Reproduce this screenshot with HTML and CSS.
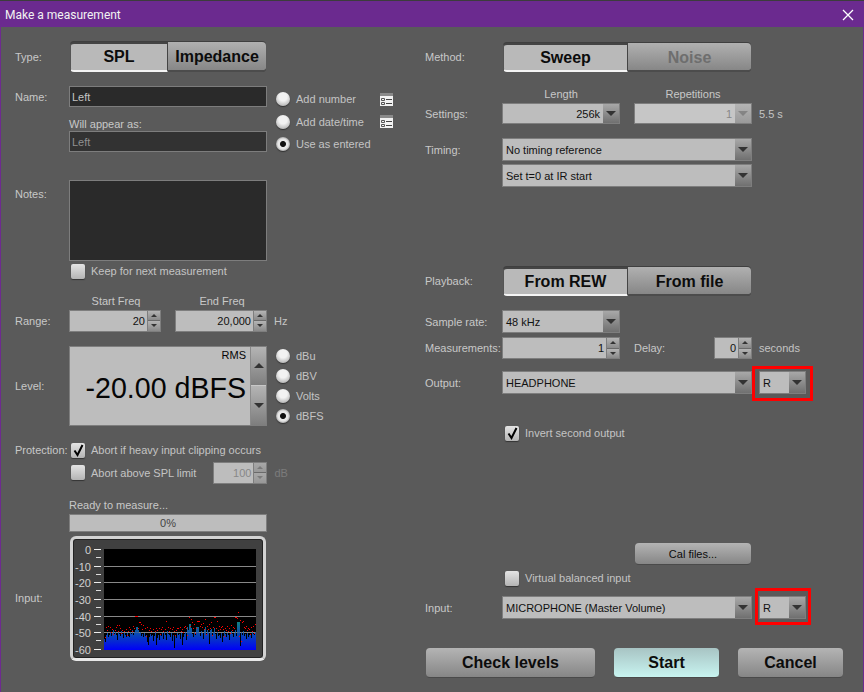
FILE: index.html
```html
<!DOCTYPE html>
<html lang="en">
<head>
    <meta charset="UTF-8">
    <title>Make a measurement</title>
    <link rel="stylesheet" href="styles.css">
</head>
<body>

<div class="dialog">
    <div class="titlebar">
        <span>Make a measurement</span>
        <svg class="close-icon" width="12" height="12" viewBox="0 0 12 12"><path d="M1 1L11 11M11 1L1 11" stroke="#fff" stroke-width="1.3" fill="none"/></svg>
    </div>

    <div class="content">
        <!-- Left column -->
        <div class="col col-left">
            <div class="row row-type">
                <span class="label">Type:</span>
                <div class="seg seg-type">
                    <span class="seg-btn on seg-spl">SPL</span>
                    <span class="seg-btn seg-imp">Impedance</span>
                </div>
            </div>

            <div class="row row-name">
                <span class="label">Name:</span>
                <div class="name-fields">
                    <div class="text-box">Left</div>
                    <div class="small-head">Will appear as:</div>
                    <div class="text-box dim">Left</div>
                </div>
                <div class="name-radios">
                    <div class="radio-row"><i class="radio"></i><span class="radio-text">Add number</span>
                        <svg class="list-icon" width="13" height="13" viewBox="0 0 13 13"><rect width="13" height="13" fill="#f2f2f2"/><rect width="13" height="3" fill="#8a8a8a"/><path d="M1.5 5.5h3v2h-3zM1.5 9.5h3v2h-3z" fill="none" stroke="#555"/><path d="M6 6.5h6M6 10.5h6" stroke="#444"/></svg>
                    </div>
                    <div class="radio-row"><i class="radio"></i><span class="radio-text">Add date/time</span>
                        <svg class="list-icon" width="13" height="13" viewBox="0 0 13 13"><rect width="13" height="13" fill="#f2f2f2"/><rect width="13" height="3" fill="#8a8a8a"/><path d="M1.5 5.5h3v2h-3zM1.5 9.5h3v2h-3z" fill="none" stroke="#555"/><path d="M6 6.5h6M6 10.5h6" stroke="#444"/></svg>
                    </div>
                    <div class="radio-row"><i class="radio sel"></i><span class="radio-text">Use as entered</span></div>
                </div>
            </div>

            <div class="row row-notes">
                <span class="label notes-label">Notes:</span>
                <div class="notes-box"></div>
            </div>
            <div class="row row-keep">
                <i class="check"></i><span class="check-text">Keep for next measurement</span>
            </div>

            <div class="row freq-heads">
                <span class="freq-head">Start Freq</span>
                <span class="freq-head end">End Freq</span>
            </div>
            <div class="row row-range">
                <span class="label">Range:</span>
                <div class="num-box freq"><span class="val">20</span><span class="spin"><b></b><b></b></span></div>
                <div class="num-box freq end"><span class="val">20,000</span><span class="spin"><b></b><b></b></span></div>
                <span class="unit">Hz</span>
            </div>

            <div class="row row-level">
                <span class="label">Level:</span>
                <div class="level-box">
                    <div class="level-read">
                        <span class="rms">RMS</span>
                        <span class="level-val">-20.00 dBFS</span>
                    </div>
                    <div class="level-arrows"><b class="up"></b><b class="down"></b></div>
                </div>
                <div class="level-radios">
                    <div class="radio-row"><i class="radio"></i><span class="radio-text">dBu</span></div>
                    <div class="radio-row"><i class="radio"></i><span class="radio-text">dBV</span></div>
                    <div class="radio-row"><i class="radio"></i><span class="radio-text">Volts</span></div>
                    <div class="radio-row"><i class="radio sel"></i><span class="radio-text">dBFS</span></div>
                </div>
            </div>

            <div class="row row-prot">
                <span class="label">Protection:</span>
                <i class="check on"><svg width="15" height="15" viewBox="0 0 15 15"><path d="M3.5 7.5L6.5 12L11.5 2" fill="none" stroke="#000" stroke-width="2"/></svg></i>
                <span class="check-text">Abort if heavy input clipping occurs</span>
            </div>
            <div class="row row-limit">
                <i class="check"></i><span class="check-text">Abort above SPL limit</span>
                <div class="num-box limit disabled"><span class="val">100</span><span class="spin"><b></b><b></b></span></div>
                <span class="unit off">dB</span>
            </div>

            <div class="ready">Ready to measure...</div>
            <div class="progress">0%</div>

            <div class="row row-input">
                <span class="label">Input:</span>
                <div class="meter">
                    <svg id="meterPlot" width="188" height="115" viewBox="74 541 188 115"></svg>
                </div>
            </div>
        </div>

        <!-- Right column -->
        <div class="col col-right">
            <div class="row row-method">
                <span class="label">Method:</span>
                <div class="seg seg-wide">
                    <span class="seg-btn on">Sweep</span>
                    <span class="seg-btn off">Noise</span>
                </div>
            </div>

            <div class="row set-heads">
                <span class="set-head">Length</span>
                <span class="set-head">Repetitions</span>
            </div>
            <div class="row row-settings">
                <span class="label">Settings:</span>
                <div class="select short right"><span class="sel-text">256k</span><span class="drop"></span></div>
                <div class="select short right disabled"><span class="sel-text">1</span><span class="drop"></span></div>
                <span class="unit">5.5 s</span>
            </div>

            <div class="row row-timing">
                <span class="label">Timing:</span>
                <div class="select long"><span class="sel-text">No timing reference</span><span class="drop"></span></div>
            </div>
            <div class="row row-timing-b">
                <div class="select long"><span class="sel-text">Set t=0 at IR start</span><span class="drop"></span></div>
            </div>

            <div class="row row-playback">
                <span class="label">Playback:</span>
                <div class="seg seg-wide">
                    <span class="seg-btn on">From REW</span>
                    <span class="seg-btn">From file</span>
                </div>
            </div>

            <div class="row row-rate">
                <span class="label">Sample rate:</span>
                <div class="select short"><span class="sel-text">48 kHz</span><span class="drop"></span></div>
            </div>
            <div class="row row-meas">
                <span class="label">Measurements:</span>
                <div class="num-box meas"><span class="val">1</span><span class="spin"><b></b><b></b></span></div>
                <span class="delay-label">Delay:</span>
                <div class="num-box delay"><span class="val">0</span><span class="spin"><b></b><b></b></span></div>
                <span class="unit">seconds</span>
            </div>

            <div class="row row-output">
                <span class="label">Output:</span>
                <div class="select long"><span class="sel-text">HEADPHONE</span><span class="drop"></span></div>
                <div class="select chan"><span class="sel-text">R</span><span class="drop"></span><span class="mark mark-out"></span></div>
            </div>

            <div class="row row-invert">
                <i class="check on"><svg width="15" height="15" viewBox="0 0 15 15"><path d="M3.5 7.5L6.5 12L11.5 2" fill="none" stroke="#000" stroke-width="2"/></svg></i>
                <span class="check-text">Invert second output</span>
            </div>

            <div class="row row-cal">
                <span class="btn cal">Cal files...</span>
            </div>
            <div class="row row-virtual">
                <i class="check"></i><span class="check-text">Virtual balanced input</span>
            </div>
            <div class="row row-mic">
                <span class="label">Input:</span>
                <div class="select long"><span class="sel-text">MICROPHONE (Master Volume)</span><span class="drop"></span></div>
                <div class="select chan"><span class="sel-text">R</span><span class="drop"></span><span class="mark mark-in"></span></div>
            </div>

            <div class="row row-actions">
                <span class="btn big check-levels">Check levels</span>
                <span class="btn big start">Start</span>
                <span class="btn big cancel">Cancel</span>
            </div>
        </div>
    </div>
</div>

<script src="meter.js"></script>
</body>
</html>
```

FILE: styles.css
```css
* {
    box-sizing: border-box;
}
html, body {
    margin: 0;
    padding: 0;
}
body {
    width: 864px;
    height: 692px;
    overflow: hidden;
    font-family: "Liberation Sans", Arial, sans-serif;
    font-size: 11px;
    color: #c8c8c8;
    background-color: #5a5a5a;
}
.dialog {
    width: 864px;
    height: 692px;
    display: flex;
    flex-direction: column;
    border-left: 1px solid #6e2a90;
    border-right: 1px solid #6e2a90;
}
.titlebar {
    height: 27px;
    flex: none;
    margin: 0 -1px;
    display: flex;
    align-items: center;
    justify-content: space-between;
    padding: 1px 10px 0 5px;
    background-color: #6b2a8f;
    border-top: 1px solid #3c3c3c;
    font-family: Roboto, sans-serif;
    font-size: 12px;
    color: #f2f2f2;
}
.content {
    display: flex;
    flex: 1;
}
.col-left {
    width: 410px;
    padding-left: 14px;
}
.col-right {
    width: 438px;
    padding-left: 14px;
}
.row {
    display: flex;
    align-items: center;
}
.label {
    flex: none;
}
.col-left .label {
    width: 54px;
}
.col-right .label {
    width: 77px;
}

/* segmented toggle */
.seg {
    display: flex;
    border-radius: 4px;
    background: #3f3f3f;
    padding: 1px 0 0;
}
.seg-type {
    margin-left: 1px;
    width: 196px;
    height: 31px;
}
.seg-wide {
    margin-left: 1px;
    width: 248px;
    height: 30px;
}
.seg-btn {
    display: flex;
    align-items: center;
    justify-content: center;
    flex: 1;
    font-size: 16px;
    font-weight: bold;
    color: #0c0c0c;
    background: linear-gradient(#b0b0b0, #848484);
    border-radius: 0 4px 4px 0;
    border-top: 2px solid transparent;
    background-origin: border-box;
    border-bottom: 2px solid #4c4c4c;
}
.seg-btn.on {
    background: #b9b9b9;
    border-radius: 4px 0 0 4px;
    border-top: 2px solid #444;
    border-left: 1px solid #555;
    border-right: 1px solid #444;
    border-bottom: 2px solid #f4f4f4;
}
.seg-btn.off {
    color: #6e6e6e;
}
.seg-spl {
    flex: none;
    width: 98px;
}
.seg-imp {
    flex: none;
    width: 98px;
}

/* text boxes */
.text-box {
    height: 21px;
    padding-left: 2px;
    line-height: 20px;
    background-color: #2a2a2a;
    border: 1px solid #7d7d7d;
    color: #c4c4c4;
}
.text-box.dim {
    background-color: #323232;
    color: #909090;
}
.row-type {
    margin-top: 14px;
}
.row-name {
    margin-top: 14px;
    align-items: flex-start;
}
.row-name .label {
    margin-top: 5px;
}
.name-fields {
    width: 198px;
}
.small-head {
    margin-top: 11px;
    height: 13px;
    line-height: 13px;
    color: #c8c8c8;
}
.name-radios {
    margin-left: 9px;
    padding-top: 2px;
}
.radio-row {
    display: flex;
    align-items: center;
    height: 22.5px;
}
.radio {
    flex: none;
    width: 14px;
    height: 14px;
    margin-right: 6px;
    border-radius: 50%;
    background: radial-gradient(circle at 50% 35%, #f2f2f2 35%, #a8a8a8 90%);
    box-shadow: 0 1px 1px #333;
}
.radio.sel {
    background: radial-gradient(circle, #111 0 2.5px, #e8e8e8 3.5px 5px, #aaa 7px);
}
.radio-text {
    color: #c4c4c4;
}
.name-radios .radio-text {
    width: 84px;
}
.list-icon {
    flex: none;
}
.row-notes {
    margin-top: 24px;
    align-items: flex-start;
}
.notes-label {
    margin-top: 8px;
}
.notes-box {
    width: 198px;
    height: 81px;
    background-color: #2a2a2a;
    border: 1px solid #7d7d7d;
}

/* check boxes */
.check {
    flex: none;
    width: 14px;
    height: 15px;
    margin-left: 2px;
    margin-right: 6px;
    border-radius: 2px;
    background: linear-gradient(#e4e4e4, #b4b4b4);
    box-shadow: 0 1px 1px #333;
}
.check svg {
    display: block;
}
.check-text {
    color: #c4c4c4;
}
.row-keep {
    margin-top: 3px;
    padding-left: 54px;
    height: 15px;
}
.freq-heads {
    margin-top: 15px;
    height: 14px;
    padding-left: 55px;
}
.freq-head {
    width: 92px;
    text-align: center;
}
.freq-head.end {
    margin-left: 14px;
}
.row-range {
    margin-top: 2px;
}

/* number spinners */
.num-box {
    display: flex;
    height: 22px;
    background-color: #bdbdbd;
    border: 1px solid #7e7e7e;
    color: #111;
}
.num-box .val {
    flex: 1;
    text-align: right;
    padding-right: 2px;
    line-height: 21px;
    font-size: 11px;
}
.spin {
    flex: none;
    width: 13px;
    display: flex;
    flex-direction: column;
    border-left: 1px solid #7e7e7e;
}
.spin b {
    flex: 1;
    display: flex;
    align-items: center;
    justify-content: center;
    background: linear-gradient(#b4b4b4, #8a8a8a);
}
.spin b:first-child {
    border-bottom: 1px solid #6a6a6a;
}
.spin b::after {
    content: "";
    border-left: 3px solid transparent;
    border-right: 3px solid transparent;
    border-bottom: 3px solid #333;
}
.spin b:last-child::after {
    border-bottom: 0;
    border-top: 3px solid #333;
}
.num-box.freq {
    width: 92px;
}
.num-box.freq.end {
    margin-left: 14px;
}
.unit {
    margin-left: 7px;
    color: #c4c4c4;
}
.unit.off {
    color: #7c7c7c;
}
.num-box.disabled {
    background-color: #bdbdbd;
    color: #888;
}
.num-box.disabled .spin b {
    background: linear-gradient(#a8a8a8, #989898);
}
.num-box.disabled .spin b::after {
    opacity: 0.35;
}

/* level */
.row-level {
    margin-top: 14px;
}
.level-box {
    display: flex;
    width: 198px;
    height: 80px;
    background-color: #bdbdbd;
    border: 1px solid #7e7e7e;
    color: #050505;
}
.level-read {
    flex: 1;
    display: flex;
    flex-direction: column;
    align-items: flex-end;
    padding-right: 4px;
}
.rms {
    margin-top: 2px;
    font-size: 11px;
}
.level-val {
    margin-top: 10px;
    font-size: 28.6px;
    line-height: 34px;
    white-space: nowrap;
}
.level-arrows {
    flex: none;
    width: 16px;
    display: flex;
    flex-direction: column;
    border-left: 1px solid #8a8a8a;
}
.level-arrows b {
    flex: 1;
    display: flex;
    align-items: center;
    justify-content: center;
    background: linear-gradient(#b4b4b4, #7e7e7e);
}
.level-arrows b.up {
    border-bottom: 1px solid #c8c8c8;
}
.level-arrows b::after {
    content: "";
    border-left: 5px solid transparent;
    border-right: 5px solid transparent;
}
.level-arrows .up::after {
    border-bottom: 5px solid #333;
}
.level-arrows .down::after {
    border-top: 5px solid #333;
}
.level-radios {
    margin-left: 9px;
}
.level-radios .radio-row {
    height: 20px;
}
.row-prot {
    margin-top: 17px;
    height: 15px;
}
.row-limit {
    margin-top: 4px;
    padding-left: 54px;
    height: 22px;
}
.row-limit .check {
    margin-left: 2px;
}
.row-prot .check {
    margin-left: 2px;
}
.num-box.limit {
    width: 54px;
    margin-left: 17px;
}
.ready {
    margin-left: 54px;
    margin-top: 15px;
    height: 13px;
    line-height: 13px;
    color: #c8c8c8;
}
.progress {
    margin-left: 54px;
    margin-top: 2px;
    width: 198px;
    height: 18px;
    line-height: 16px;
    text-align: center;
    background-color: #bdbdbd;
    border: 1px solid #7e7e7e;
    color: #444;
}
.row-input {
    margin-top: 4px;
}
.row-input .label {
    width: 55px;
}

/* input meter */
.meter {
    width: 196px;
    height: 125px;
    padding: 5px 4px;
    background-color: #404040;
    border: 3px solid #d2d2d2;
    border-bottom-color: #e8e8e8;
    border-radius: 6px;
    box-shadow: inset 0 0 0 1px #222;
}
.meter svg {
    display: block;
    margin: -3px 0 0 -3px;
}
.meter text {
    font-family: "Liberation Sans", Arial, sans-serif;
    font-size: 11px;
    fill: #d0d0d0;
    text-anchor: end;
}

/* right column */
.row-method {
    margin-top: 15px;
}
.set-heads {
    margin-top: 15px;
    height: 14px;
    padding-left: 77px;
}
.set-head {
    width: 118px;
    text-align: center;
}
.set-head + .set-head {
    margin-left: 14px;
}
.row-settings {
    margin-top: 2px;
}

/* drop downs */
.select {
    position: relative;
    display: flex;
    height: 23px;
    background-color: #bdbdbd;
    border: 1px solid #7e7e7e;
    color: #111;
}
.sel-text {
    flex: 1;
    padding-left: 3px;
    line-height: 22px;
    font-size: 11px;
    white-space: nowrap;
}
.drop {
    flex: none;
    width: 16px;
    display: flex;
    align-items: center;
    justify-content: center;
    background: linear-gradient(#a8a8a8, #707070);
}
.drop::after {
    content: "";
    border-left: 5px solid transparent;
    border-right: 5px solid transparent;
    border-top: 5px solid #333;
}
.select.short {
    width: 118px;
}
.select.short + .select.short {
    margin-left: 14px;
}
.select.long {
    width: 250px;
}
.select.right .sel-text {
    text-align: right;
    padding-right: 3px;
}
.row-settings .select {
    height: 21px;
}
.row-settings .sel-text {
    line-height: 20px;
}
.select.disabled {
    background-color: #c6c6c6;
    color: #888;
}
.select.disabled .drop {
    background: linear-gradient(#b4b4b4, #9a9a9a);
}
.select.disabled .drop::after {
    opacity: 0.3;
}
.select.chan {
    width: 47px;
    margin-left: 7px;
}
.mark {
    position: absolute;
    border: 3px solid #f00;
}
.mark-out {
    inset: -6px -8px -8px -8px;
}
.mark-in {
    inset: -9px -6px -7px -5px;
}
.row-timing {
    margin-top: 14px;
}
.row-timing-b {
    margin-top: 3px;
    padding-left: 77px;
}
.row-playback {
    margin-top: 79px;
}
.row-rate {
    margin-top: 14px;
}
.row-meas {
    margin-top: 4px;
}
.num-box.meas {
    width: 118px;
}
.delay-label {
    margin-left: 14px;
    width: 80px;
}
.num-box.delay {
    width: 38px;
}
.row-output {
    margin-top: 12px;
}
.row-invert {
    margin-top: 31px;
    padding-left: 78px;
    height: 16px;
}
.row-cal {
    margin-top: 102px;
    padding-left: 210px;
}
.btn {
    display: flex;
    align-items: center;
    justify-content: center;
    background: linear-gradient(#b4b4b4, #868686);
    border-radius: 4px;
    color: #0c0c0c;
    border-bottom: 1px solid #4a4a4a;
}
.btn.cal {
    width: 116px;
    height: 22px;
    font-size: 11px;
}
.row-virtual {
    margin-top: 5px;
    padding-left: 78px;
    height: 16px;
}
.row-mic {
    margin-top: 10px;
}
.row-actions {
    margin-top: 29px;
    padding-left: 1px;
}
.btn.big {
    height: 30px;
    padding-top: 1px;
    font-size: 16px;
    font-weight: bold;
}
.check-levels {
    width: 169px;
}
.start {
    width: 105px;
    margin-left: 19px;
    background: linear-gradient(#a8c4c4, #c8f4f0);
}
.cancel {
    width: 105px;
    margin-left: 19px;
}
```

FILE: meter.js
```js
// Draws the input level meter: scale, grid, bars and peak dots.
const svg = document.getElementById('meterPlot');
const NS = 'http://www.w3.org/2000/svg';

const tops = [
    639,642,635,633,637,635,632,636,633,630,
    634,632,635,640,632,634,636,631,634,638,
    633,635,637,633,636,637,632,634,630,635,
    632,630,627,627,630,633,632,636,634,637,
    633,636,635,642,645,637,634,636,635,641,
    636,632,645,638,635,640,634,636,633,639,
    632,635,640,631,634,635,637,633,641,635,
    648,636,638,633,635,634,639,633,645,637,
    634,632,640,627,630,624,624,628,634,637,
    632,635,627,627,627,633,636,631,633,639,
    630,627,634,630,632,644,630,629,635,632,
    628,634,639,632,636,635,638,633,642,636,
    631,634,637,633,635,640,633,631,634,637,
    633,630,636,622,622,622,646,632,635,631,
    636,634,639,633,637,635,635,638,631,634,
    635,632
];

const dots = [
    [106,627],[108,626],[110,627],[112,629],[115,630],[116,627],[118,631],[120,628],[122,630],[124,631],
    [117,625],[119,625],[126,629],[128,631],[130,629],[132,631],[134,628],[135,616],[136,616],[137,616],
    [133,626],[139,622],[140,622],[141,624],[143,625],[145,628],[147,627],[149,630],[151,631],[153,629],
    [155,631],[157,630],[159,628],[161,629],[163,631],[165,629],[166,621],[168,627],[170,628],[172,629],
    [174,631],[176,630],[178,628],[180,627],[182,629],[184,627],[186,628],[189,617],[191,619],[192,622],
    [194,624],[197,621],[198,621],[199,621],[201,624],[203,623],[205,619],[207,626],[209,624],[211,622],
    [214,617],[215,617],[217,621],[219,626],[221,627],[223,629],[225,628],[227,626],[229,628],[231,625],
    [233,627],[235,617],[236,617],[238,612],[237,618],[240,620],[242,622],[243,621],[245,628],[247,630],
    [249,629],[251,627],[253,626],[255,624],[113,634],[146,636],[160,634],[175,635],[195,633],[206,634],
    [224,636],[241,641],[250,634],[254,633],[105,637],[127,635],[187,635],[212,635],[230,633],[239,636],
    [107,630],[111,632],[121,633],[129,627],[138,628],[142,629],[150,628],[156,628],[162,627],[169,631],
    [173,627],[177,628],[181,631],[183,632],[185,626],[190,626],[193,628],[196,628],[200,626],[202,627],
    [204,629],[208,629],[210,628],[213,627],[216,628],[218,630],[220,629],[222,626],[226,630],[228,631],
    [232,630],[234,628],[244,627],[246,626],[248,628],[252,631]
];

function add(tag, attrs, text) {
    const el = document.createElementNS(NS, tag);
    for (const key in attrs) {
        el.setAttribute(key, attrs[key]);
    }
    if (text) el.textContent = text;
    svg.appendChild(el);
    return el;
}

// Blue at the bottom, teal at the top of a bar
const defs = add('defs', {});
const grad = document.createElementNS(NS, 'linearGradient');
grad.setAttribute('id', 'barFill');
grad.setAttribute('gradientUnits', 'userSpaceOnUse');
grad.setAttribute('x1', 0);
grad.setAttribute('x2', 0);
grad.setAttribute('y1', 650);
grad.setAttribute('y2', 622);
grad.innerHTML = '<stop offset="0" stop-color="#0000f8"/><stop offset="1" stop-color="#108080"/>';
defs.appendChild(grad);

add('rect', { x: 104, y: 549, width: 152, height: 101, fill: '#000' });

// Scale and grid
const marks = [549.5, 566, 582, 599, 616, 632, 649];
marks.forEach((y, i) => {
    const py = Math.floor(y) + 0.5;
    add('text', { x: 91, y: py + 4 }, i === 0 ? '0' : '-' + i * 10);
    add('path', { d: `M94 ${py}H101`, stroke: '#eee', 'stroke-width': 1 });
    if (i > 0) {
        add('path', { d: `M104 ${py}H256`, stroke: '#888', 'stroke-width': 1 });
    }
    if (i < marks.length - 1) {
        add('path', { d: `M96 ${py + 8}H101`, stroke: '#ddd', 'stroke-width': 1 });
    }
});

const bars = tops.map((top, i) => `M${104 + i} 650V${top}h1V650z`).join('');
add('path', { d: bars, fill: 'url(#barFill)', 'shape-rendering': 'crispEdges' });

// The -50 grid line shows faintly through the bars
add('path', { d: 'M104 632.5H256', stroke: '#888', 'stroke-opacity': 0.35 });

const peaks = dots.map(([x, y]) => `M${x} ${y}h1v1h-1z`).join('');
add('path', { d: peaks, fill: '#f00', 'shape-rendering': 'crispEdges' });
```
